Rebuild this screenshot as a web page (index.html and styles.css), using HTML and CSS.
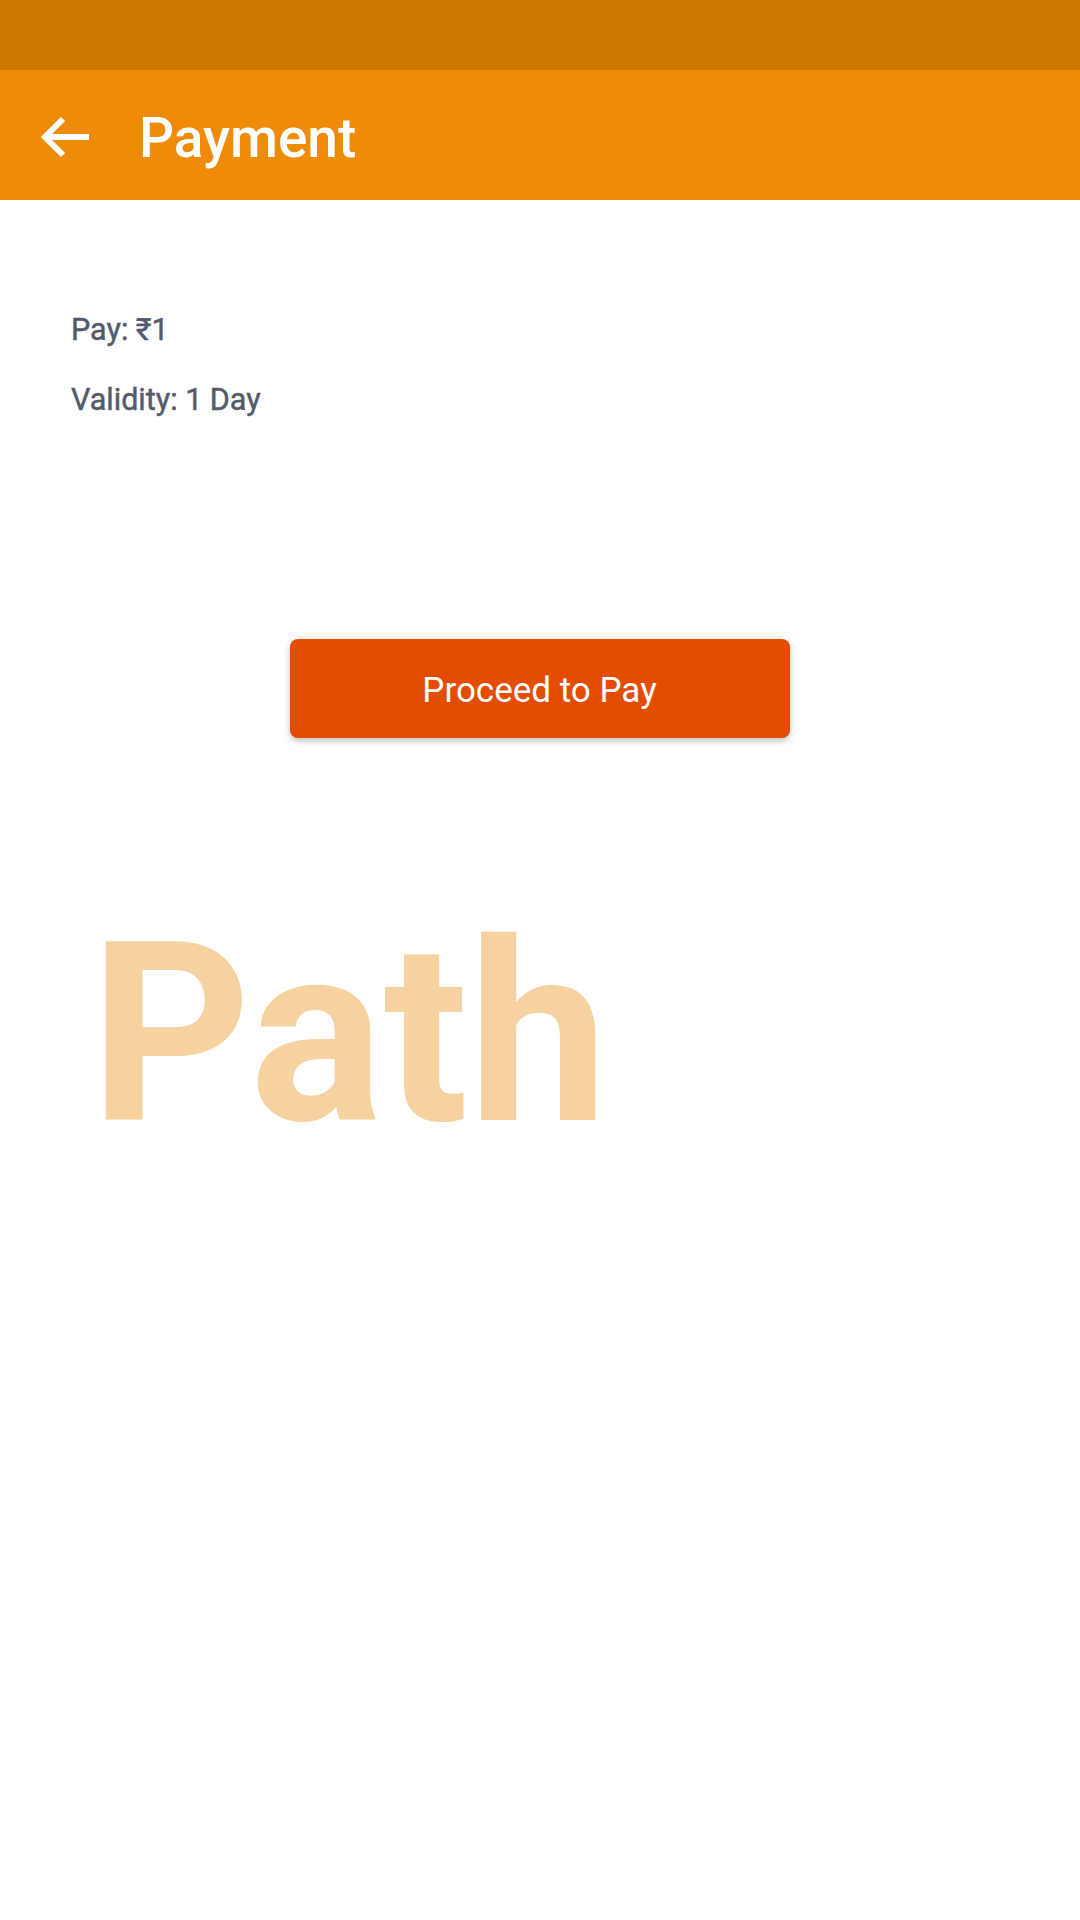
FILE: index.html
```html
<!DOCTYPE html>
<html>
<head>
<meta charset="utf-8">
<link rel="stylesheet" href="styles.css">
</head>
<body>
<div class="status"></div>
<header class="appbar">
  <svg class="back" width="50" height="44" viewBox="0 0 50 44">
    <path d="M49 22H7M23 4L5 22L23 40" fill="none" stroke="#fff" stroke-width="6"/>
  </svg>
  <h1 class="title">Payment</h1>
</header>
<main class="content">
  <div class="info">
    <p class="line">Pay: ₹1</p>
    <p class="line">Validity: 1 Day</p>
  </div>
  <div class="actions">
    <button class="pay">Proceed to Pay</button>
  </div>
  <div class="brand">Path</div>
</main>
</body>
</html>
```
FILE: styles.css
```css
* { box-sizing: border-box; }
html, body { margin: 0; padding: 0; background: #fff; }
body { width: 1080px; height: 1920px; font-family: Roboto, "Noto Sans", sans-serif; overflow: hidden; }
.status { height: 70px; background: #CD7802; }
.appbar { height: 130px; background: #EE8C0A; display: flex; align-items: center; padding-left: 40px; }
.back { display: block; margin-top: 4px; }
.title { margin: 6px 0 0 49px; color: #fff; font-size: 55px; font-weight: 500; line-height: 1; }
.content { padding: 0; }
.info { padding: 95px 0 0 71px; }
.line { margin: 0; font-size: 30.5px; font-weight: 400; -webkit-text-stroke: 0.45px #525A6B; color: #525A6B; line-height: 70px; height: 70px; }
.actions { display: flex; justify-content: center; padding-top: 204px; }
.pay { width: 500px; height: 99px; padding-top: 4px; border: none; border-radius: 8px; background: #E24C03; color: #fff; font-family: Roboto, sans-serif; font-size: 35px; font-weight: 400; box-shadow: 0 3px 6px rgba(0,0,0,0.25); margin-left: -1px; }
.brand { padding: 172px 0 0 90px; font-size: 250px; font-weight: 700; color: #F6D2A0; line-height: 1; }
```
